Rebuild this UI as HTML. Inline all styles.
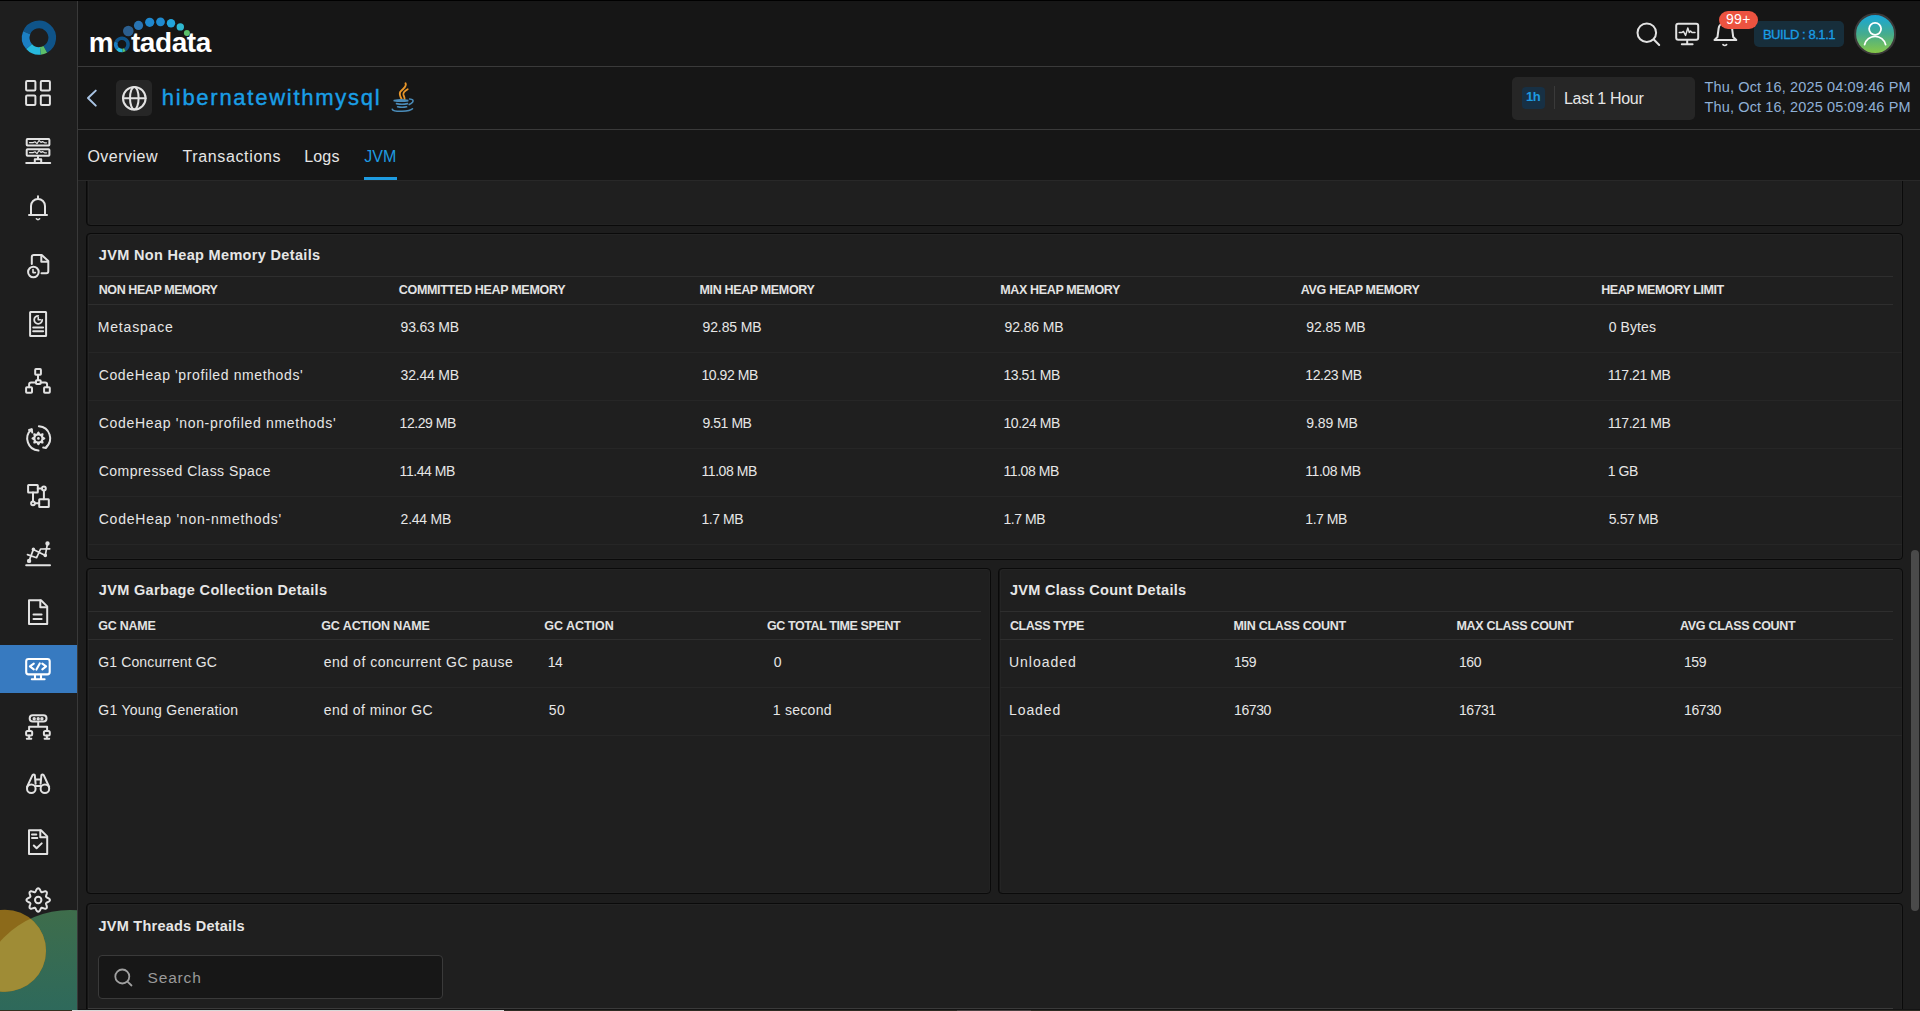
<!DOCTYPE html>
<html><head><meta charset="utf-8"><style>
*{margin:0;padding:0;box-sizing:border-box}
html,body{width:1920px;height:1011px;overflow:hidden;background:#1d1d1d;font-family:"Liberation Sans",sans-serif}
.t{position:absolute;white-space:nowrap;line-height:1}
svg{position:absolute;overflow:visible}
</style></head>
<body>
<div style="position:absolute;left:0px;top:0px;width:1920px;height:1px;background:#000"></div>
<div style="position:absolute;left:0px;top:1px;width:77px;height:1010px;background:#1e1e1e"></div>
<div style="position:absolute;left:77px;top:1px;width:1px;height:1010px;background:#393939"></div>
<div style="position:absolute;left:86px;top:150px;width:1817px;height:76px;background:#1f1f1f;border:1px solid #0a0a0a;border-radius:4px;box-shadow:inset 1px 0 0 #151515, inset 2px 1px 0 #242424, inset -1px -1px 0 #222222"></div>
<div style="position:absolute;left:86px;top:233px;width:1817px;height:327px;background:#1f1f1f;border:1px solid #0a0a0a;border-radius:4px;box-shadow:inset 1px 0 0 #151515, inset 2px 1px 0 #242424, inset -1px -1px 0 #222222"></div>
<div style="position:absolute;left:86px;top:568px;width:905px;height:326px;background:#1f1f1f;border:1px solid #0a0a0a;border-radius:4px;box-shadow:inset 1px 0 0 #151515, inset 2px 1px 0 #242424, inset -1px -1px 0 #222222"></div>
<div style="position:absolute;left:998px;top:568px;width:905px;height:326px;background:#1f1f1f;border:1px solid #0a0a0a;border-radius:4px;box-shadow:inset 1px 0 0 #151515, inset 2px 1px 0 #242424, inset -1px -1px 0 #222222"></div>
<div style="position:absolute;left:86px;top:903px;width:1817px;height:198px;background:#1f1f1f;border:1px solid #0a0a0a;border-radius:4px;box-shadow:inset 1px 0 0 #151515, inset 2px 1px 0 #242424, inset -1px -1px 0 #222222"></div>
<div style="position:absolute;left:78px;top:1px;width:1842px;height:65px;background:#161616"></div>
<div style="position:absolute;left:78px;top:66px;width:1842px;height:1px;background:#3a3a3a"></div>
<div style="position:absolute;left:78px;top:67px;width:1842px;height:62px;background:#161616"></div>
<div style="position:absolute;left:78px;top:129px;width:1842px;height:1px;background:#3a3a3a"></div>
<div style="position:absolute;left:78px;top:130px;width:1842px;height:50px;background:#161616"></div>
<div style="position:absolute;left:78px;top:180px;width:1842px;height:1px;background:#282828"></div>
<div style="position:absolute;left:1911px;top:550px;width:8px;height:361px;background:#4a4a4a;border-radius:4px"></div>
<div class="t" style="left:98.75px;top:247.73px;font-size:14.5px;font-weight:700;color:#e6e6e6;letter-spacing:0.331px;">JVM Non Heap Memory Details</div>
<div style="position:absolute;left:88px;top:276px;width:1805px;height:1px;background:#2e2e2e"></div>
<div style="position:absolute;left:88px;top:304px;width:1805px;height:1px;background:#2e2e2e"></div>
<div class="t" style="left:98.75px;top:284.42px;font-size:12.5px;font-weight:700;color:#e3e3e3;letter-spacing:-0.421px;">NON HEAP MEMORY</div>
<div class="t" style="left:398.75px;top:284.42px;font-size:12.5px;font-weight:700;color:#e3e3e3;letter-spacing:-0.308px;">COMMITTED HEAP MEMORY</div>
<div class="t" style="left:699.50px;top:284.42px;font-size:12.5px;font-weight:700;color:#e3e3e3;letter-spacing:-0.345px;">MIN HEAP MEMORY</div>
<div class="t" style="left:1000.30px;top:284.42px;font-size:12.5px;font-weight:700;color:#e3e3e3;letter-spacing:-0.357px;">MAX HEAP MEMORY</div>
<div class="t" style="left:1300.80px;top:284.42px;font-size:12.5px;font-weight:700;color:#e3e3e3;letter-spacing:-0.313px;">AVG HEAP MEMORY</div>
<div class="t" style="left:1601.20px;top:284.42px;font-size:12.5px;font-weight:700;color:#e3e3e3;letter-spacing:-0.416px;">HEAP MEMORY LIMIT</div>
<div class="t" style="left:97.75px;top:320.45px;font-size:14px;font-weight:400;color:#e6e6e6;letter-spacing:0.819px;">Metaspace</div>
<div class="t" style="left:400.60px;top:320.45px;font-size:14px;font-weight:400;color:#e6e6e6;letter-spacing:-0.212px;">93.63 MB</div>
<div class="t" style="left:702.50px;top:320.45px;font-size:14px;font-weight:400;color:#e6e6e6;letter-spacing:-0.112px;">92.85 MB</div>
<div class="t" style="left:1004.50px;top:320.45px;font-size:14px;font-weight:400;color:#e6e6e6;letter-spacing:-0.112px;">92.86 MB</div>
<div class="t" style="left:1306.30px;top:320.45px;font-size:14px;font-weight:400;color:#e6e6e6;letter-spacing:-0.084px;">92.85 MB</div>
<div class="t" style="left:1608.70px;top:320.45px;font-size:14px;font-weight:400;color:#e6e6e6;letter-spacing:0.102px;">0 Bytes</div>
<div style="position:absolute;left:88px;top:352px;width:1814px;height:1px;background:#262626"></div>
<div class="t" style="left:98.75px;top:368.45px;font-size:14px;font-weight:400;color:#e6e6e6;letter-spacing:0.610px;">CodeHeap &#x27;profiled nmethods&#x27;</div>
<div class="t" style="left:400.60px;top:368.45px;font-size:14px;font-weight:400;color:#e6e6e6;letter-spacing:-0.212px;">32.44 MB</div>
<div class="t" style="left:701.50px;top:368.45px;font-size:14px;font-weight:400;color:#e6e6e6;letter-spacing:-0.450px;">10.92 MB</div>
<div class="t" style="left:1003.50px;top:368.45px;font-size:14px;font-weight:400;color:#e6e6e6;letter-spacing:-0.450px;">13.51 MB</div>
<div class="t" style="left:1305.30px;top:368.45px;font-size:14px;font-weight:400;color:#e6e6e6;letter-spacing:-0.450px;">12.23 MB</div>
<div class="t" style="left:1607.70px;top:368.45px;font-size:14px;font-weight:400;color:#e6e6e6;letter-spacing:-0.450px;">117.21 MB</div>
<div style="position:absolute;left:88px;top:400px;width:1814px;height:1px;background:#262626"></div>
<div class="t" style="left:98.75px;top:416.45px;font-size:14px;font-weight:400;color:#e6e6e6;letter-spacing:0.692px;">CodeHeap &#x27;non-profiled nmethods&#x27;</div>
<div class="t" style="left:399.60px;top:416.45px;font-size:14px;font-weight:400;color:#e6e6e6;letter-spacing:-0.450px;">12.29 MB</div>
<div class="t" style="left:702.50px;top:416.45px;font-size:14px;font-weight:400;color:#e6e6e6;letter-spacing:-0.450px;">9.51 MB</div>
<div class="t" style="left:1003.50px;top:416.45px;font-size:14px;font-weight:400;color:#e6e6e6;letter-spacing:-0.450px;">10.24 MB</div>
<div class="t" style="left:1306.30px;top:416.45px;font-size:14px;font-weight:400;color:#e6e6e6;letter-spacing:-0.100px;">9.89 MB</div>
<div class="t" style="left:1607.70px;top:416.45px;font-size:14px;font-weight:400;color:#e6e6e6;letter-spacing:-0.450px;">117.21 MB</div>
<div style="position:absolute;left:88px;top:448px;width:1814px;height:1px;background:#262626"></div>
<div class="t" style="left:98.75px;top:464.45px;font-size:14px;font-weight:400;color:#e6e6e6;letter-spacing:0.473px;">Compressed Class Space</div>
<div class="t" style="left:399.60px;top:464.45px;font-size:14px;font-weight:400;color:#e6e6e6;letter-spacing:-0.450px;">11.44 MB</div>
<div class="t" style="left:701.50px;top:464.45px;font-size:14px;font-weight:400;color:#e6e6e6;letter-spacing:-0.450px;">11.08 MB</div>
<div class="t" style="left:1003.50px;top:464.45px;font-size:14px;font-weight:400;color:#e6e6e6;letter-spacing:-0.450px;">11.08 MB</div>
<div class="t" style="left:1305.30px;top:464.45px;font-size:14px;font-weight:400;color:#e6e6e6;letter-spacing:-0.450px;">11.08 MB</div>
<div class="t" style="left:1607.70px;top:464.45px;font-size:14px;font-weight:400;color:#e6e6e6;letter-spacing:-0.450px;">1 GB</div>
<div style="position:absolute;left:88px;top:496px;width:1814px;height:1px;background:#262626"></div>
<div class="t" style="left:98.75px;top:512.45px;font-size:14px;font-weight:400;color:#e6e6e6;letter-spacing:0.761px;">CodeHeap &#x27;non-nmethods&#x27;</div>
<div class="t" style="left:400.60px;top:512.45px;font-size:14px;font-weight:400;color:#e6e6e6;letter-spacing:-0.250px;">2.44 MB</div>
<div class="t" style="left:701.50px;top:512.45px;font-size:14px;font-weight:400;color:#e6e6e6;letter-spacing:-0.450px;">1.7 MB</div>
<div class="t" style="left:1003.50px;top:512.45px;font-size:14px;font-weight:400;color:#e6e6e6;letter-spacing:-0.450px;">1.7 MB</div>
<div class="t" style="left:1305.30px;top:512.45px;font-size:14px;font-weight:400;color:#e6e6e6;letter-spacing:-0.450px;">1.7 MB</div>
<div class="t" style="left:1608.70px;top:512.45px;font-size:14px;font-weight:400;color:#e6e6e6;letter-spacing:-0.367px;">5.57 MB</div>
<div style="position:absolute;left:88px;top:544px;width:1814px;height:1px;background:#262626"></div>
<div class="t" style="left:98.75px;top:583.23px;font-size:14.5px;font-weight:700;color:#e6e6e6;letter-spacing:0.343px;">JVM Garbage Collection Details</div>
<div style="position:absolute;left:88px;top:611px;width:893px;height:1px;background:#2e2e2e"></div>
<div style="position:absolute;left:88px;top:639px;width:893px;height:1px;background:#2e2e2e"></div>
<div class="t" style="left:98.25px;top:619.92px;font-size:12.5px;font-weight:700;color:#e3e3e3;letter-spacing:-0.240px;">GC NAME</div>
<div class="t" style="left:321.25px;top:619.92px;font-size:12.5px;font-weight:700;color:#e3e3e3;letter-spacing:-0.102px;">GC ACTION NAME</div>
<div class="t" style="left:544.25px;top:619.92px;font-size:12.5px;font-weight:700;color:#e3e3e3;letter-spacing:-0.014px;">GC ACTION</div>
<div class="t" style="left:767.00px;top:619.92px;font-size:12.5px;font-weight:700;color:#e3e3e3;letter-spacing:-0.407px;">GC TOTAL TIME SPENT</div>
<div class="t" style="left:98.25px;top:655.45px;font-size:14px;font-weight:400;color:#e6e6e6;letter-spacing:0.127px;">G1 Concurrent GC</div>
<div class="t" style="left:323.75px;top:655.45px;font-size:14px;font-weight:400;color:#e6e6e6;letter-spacing:0.526px;">end of concurrent GC pause</div>
<div class="t" style="left:547.75px;top:655.45px;font-size:14px;font-weight:400;color:#e6e6e6;letter-spacing:-0.450px;">14</div>
<div class="t" style="left:773.75px;top:655.45px;font-size:14px;font-weight:400;color:#e6e6e6;letter-spacing:0.000px;">0</div>
<div style="position:absolute;left:88px;top:687px;width:902px;height:1px;background:#262626"></div>
<div class="t" style="left:98.25px;top:703.45px;font-size:14px;font-weight:400;color:#e6e6e6;letter-spacing:0.284px;">G1 Young Generation</div>
<div class="t" style="left:323.75px;top:703.45px;font-size:14px;font-weight:400;color:#e6e6e6;letter-spacing:0.439px;">end of minor GC</div>
<div class="t" style="left:548.75px;top:703.45px;font-size:14px;font-weight:400;color:#e6e6e6;letter-spacing:0.464px;">50</div>
<div class="t" style="left:772.75px;top:703.45px;font-size:14px;font-weight:400;color:#e6e6e6;letter-spacing:0.281px;">1 second</div>
<div style="position:absolute;left:88px;top:735px;width:902px;height:1px;background:#262626"></div>
<div class="t" style="left:1010.00px;top:583.23px;font-size:14.5px;font-weight:700;color:#e6e6e6;letter-spacing:0.275px;">JVM Class Count Details</div>
<div style="position:absolute;left:1000px;top:611px;width:893px;height:1px;background:#2e2e2e"></div>
<div style="position:absolute;left:1000px;top:639px;width:893px;height:1px;background:#2e2e2e"></div>
<div class="t" style="left:1010.00px;top:619.92px;font-size:12.5px;font-weight:700;color:#e3e3e3;letter-spacing:-0.450px;">CLASS TYPE</div>
<div class="t" style="left:1233.50px;top:619.92px;font-size:12.5px;font-weight:700;color:#e3e3e3;letter-spacing:-0.288px;">MIN CLASS COUNT</div>
<div class="t" style="left:1456.50px;top:619.92px;font-size:12.5px;font-weight:700;color:#e3e3e3;letter-spacing:-0.314px;">MAX CLASS COUNT</div>
<div class="t" style="left:1680.00px;top:619.92px;font-size:12.5px;font-weight:700;color:#e3e3e3;letter-spacing:-0.305px;">AVG CLASS COUNT</div>
<div class="t" style="left:1009.00px;top:655.45px;font-size:14px;font-weight:400;color:#e6e6e6;letter-spacing:0.978px;">Unloaded</div>
<div class="t" style="left:1234.00px;top:655.45px;font-size:14px;font-weight:400;color:#e6e6e6;letter-spacing:-0.450px;">159</div>
<div class="t" style="left:1459.00px;top:655.45px;font-size:14px;font-weight:400;color:#e6e6e6;letter-spacing:-0.450px;">160</div>
<div class="t" style="left:1684.00px;top:655.45px;font-size:14px;font-weight:400;color:#e6e6e6;letter-spacing:-0.450px;">159</div>
<div style="position:absolute;left:1000px;top:687px;width:902px;height:1px;background:#262626"></div>
<div class="t" style="left:1009.00px;top:703.45px;font-size:14px;font-weight:400;color:#e6e6e6;letter-spacing:0.914px;">Loaded</div>
<div class="t" style="left:1234.00px;top:703.45px;font-size:14px;font-weight:400;color:#e6e6e6;letter-spacing:-0.411px;">16730</div>
<div class="t" style="left:1459.00px;top:703.45px;font-size:14px;font-weight:400;color:#e6e6e6;letter-spacing:-0.450px;">16731</div>
<div class="t" style="left:1684.00px;top:703.45px;font-size:14px;font-weight:400;color:#e6e6e6;letter-spacing:-0.411px;">16730</div>
<div style="position:absolute;left:1000px;top:735px;width:902px;height:1px;background:#262626"></div>
<div class="t" style="left:98.50px;top:918.53px;font-size:14.5px;font-weight:700;color:#e6e6e6;letter-spacing:0.241px;">JVM Threads Details</div>
<div style="position:absolute;left:98px;top:955px;width:345px;height:44px;background:#171717;border:1px solid #3a3a3a;border-radius:4px"></div>
<div class="t" style="left:147.50px;top:969.68px;font-size:15.5px;font-weight:400;color:#9a9a9a;letter-spacing:0.842px;">Search</div>
<div style="position:absolute;left:88px;top:1008px;width:1805px;height:1px;background:#3a3a3a"></div>
<div style="position:absolute;left:78px;top:1009px;width:1842px;height:1px;background:#141414"></div>
<div class="t" style="left:87.40px;top:149.26px;font-size:16px;font-weight:400;color:#e6e6e6;letter-spacing:0.482px;">Overview</div>
<div class="t" style="left:182.40px;top:149.26px;font-size:16px;font-weight:400;color:#e6e6e6;letter-spacing:0.645px;">Transactions</div>
<div class="t" style="left:304.30px;top:149.26px;font-size:16px;font-weight:400;color:#e6e6e6;letter-spacing:0.135px;">Logs</div>
<div class="t" style="left:364.20px;top:149.26px;font-size:16px;font-weight:400;color:#1e9be0;letter-spacing:0.114px;">JVM</div>
<div style="position:absolute;left:364px;top:177px;width:33px;height:3px;background:#1e9be0"></div>
<div class="t" style="left:161.80px;top:87.18px;font-size:22px;font-weight:400;color:#1a9fe6;letter-spacing:1.734px;-webkit-text-stroke:0.4px #1a9fe6">hibernatewithmysql</div>
<div style="position:absolute;left:116px;top:80px;width:36px;height:36px;background:#262626;border-radius:5px"></div>
<div style="position:absolute;left:1512px;top:77px;width:183px;height:43px;background:#262626;border-radius:5px"></div>
<div style="position:absolute;left:1522px;top:87px;width:23px;height:22px;background:#173044;border-radius:4px"></div>
<div class="t" style="left:1526.00px;top:90.00px;font-size:13px;font-weight:700;color:#1e9be0;letter-spacing:-0.450px;">1h</div>
<div style="position:absolute;left:1554px;top:86px;width:1px;height:23px;background:#3a3a3a"></div>
<div class="t" style="left:1564.00px;top:90.96px;font-size:16px;font-weight:400;color:#e6e6e6;letter-spacing:-0.298px;">Last 1 Hour</div>
<div class="t" style="left:1704.50px;top:80.03px;font-size:14.5px;font-weight:400;color:#8fb0d6;letter-spacing:0.134px;">Thu, Oct 16, 2025 04:09:46 PM</div>
<div class="t" style="left:1704.50px;top:100.43px;font-size:14.5px;font-weight:400;color:#8fb0d6;letter-spacing:0.134px;">Thu, Oct 16, 2025 05:09:46 PM</div>
<div style="position:absolute;left:1754px;top:21px;width:90px;height:26px;background:#172e3b;border-radius:5px"></div>
<div class="t" style="left:1762.90px;top:27.90px;font-size:13px;font-weight:400;color:#1a9ee6;letter-spacing:-0.450px;-webkit-text-stroke:0.3px #1a9ee6">BUILD : 8.1.1</div>
<div class="t" style="left:88.70px;top:29.30px;font-size:28px;font-weight:700;color:#ffffff;letter-spacing:0.000px;">m</div>
<div class="t" style="left:131.00px;top:29.30px;font-size:28px;font-weight:700;color:#ffffff;letter-spacing:-0.450px;">tadata</div>
<svg style="left:0;top:0" width="1920" height="1011" viewBox="0 0 1920 1011"><defs><clipPath id="sbclip"><rect x="0" y="1" width="77" height="1009"/></clipPath><clipPath id="greenc"><circle cx="70" cy="1003.5" r="93.5"/></clipPath><linearGradient id="gg" gradientUnits="userSpaceOnUse" x1="0" y1="910" x2="0" y2="1010"><stop offset="0" stop-color="#3e6d4b"/><stop offset="1" stop-color="#2e695b"/></linearGradient></defs><g clip-path="url(#sbclip)"><circle cx="70" cy="1003.5" r="93.5" fill="url(#gg)"/><circle cx="5" cy="950.7" r="41" fill="#8c6a1a"/><circle cx="5" cy="950.7" r="41" fill="#9f8c36" clip-path="url(#greenc)"/></g><path d="M26.68,32.79 A13.25,13.25 0 1 1 45.27,49.41" stroke="#0f5489" stroke-width="7.7" fill="none"/><path d="M45.27,49.41 A13.25,13.25 0 0 1 40.36,50.93" stroke="#5cbf6a" stroke-width="7.7" fill="none"/><path d="M40.36,50.93 A13.25,13.25 0 0 1 29.06,46.55" stroke="#27b9de" stroke-width="7.7" fill="none"/><path d="M29.06,46.55 A13.25,13.25 0 0 1 26.68,32.79" stroke="#1b7fc4" stroke-width="7.7" fill="none"/><g stroke="#e2e2e2" stroke-width="2" fill="none" stroke-linecap="round" stroke-linejoin="round"><rect x="26.1" y="80.9" width="9.3" height="9.5" rx="1"/><rect x="40.8" y="80.9" width="9.1" height="9.5" rx="1"/><rect x="26.1" y="95.6" width="9.3" height="9.3" rx="1"/><rect x="40.8" y="95.6" width="9.1" height="9.3" rx="1"/></g><g stroke="#e2e2e2" stroke-width="2" fill="none" stroke-linecap="round" stroke-linejoin="round"><rect x="26.7" y="139.1" width="22.7" height="6.5" rx="0.8"/><rect x="26.7" y="149.2" width="22.7" height="6.5" rx="0.8"/><path d="M38,156.7 V158.5 M34.8,162.5 V159.2 H41.2 V162.5 M26.2,163 H50.2" /><path stroke-width="1.2" d="M29.5,142.6 H33 L35,141.8 L37,143.6 L39,140.5 L41,142.4 L42.5,141.6 L44.5,142.8 H46.5 M29.5,152.6 H33 L35,151.8 L37,153.6 L39,150.5 L41,152.4 L42.5,151.6 L44.5,152.8 H46.5"/></g><g stroke="#e2e2e2" stroke-width="2" fill="none" stroke-linecap="round" stroke-linejoin="round"><path d="M31,214.5 V206 A7,7 0 0 1 45,206 V214.5"/><path d="M29,215 H47"/><path d="M38,196.3 V198.5"/><path stroke-width="1.6" d="M36.4,218.8 Q38,220.4 39.6,218.8"/></g><g stroke="#e2e2e2" stroke-width="2" fill="none" stroke-linecap="round" stroke-linejoin="round"><path d="M31.8,264 V257 A2,2 0 0 1 33.8,255 H41.7 L48.3,261 V271.3 A2,2 0 0 1 46.3,273.3 H41.5"/><path d="M41.3,255.5 V261.8 H47.8"/><circle cx="33.4" cy="272" r="5.3"/><path stroke-width="1.6" d="M33,269.6 V272.6 H35.4"/></g><g stroke="#e2e2e2" stroke-width="2" fill="none" stroke-linecap="round" stroke-linejoin="round"><rect x="30.1" y="312.1" width="16" height="23.9" rx="0.5"/><path d="M33.2,327.5 H43.1 M33.2,331.3 H43.1"/><path stroke-width="1.8" d="M38.25,315.8 A4,4 0 1 0 42.2,319.8"/><path stroke-width="1.6" d="M38.25,317.5 V319.8 H40.5"/></g><g stroke="#e2e2e2" stroke-width="2" fill="none" stroke-linecap="round" stroke-linejoin="round"><rect x="35.2" y="369.1" width="5.7" height="5.7" rx="0.8"/><rect x="36" y="380.2" width="4.7" height="3.9" rx="0.8"/><rect x="26.1" y="387.3" width="5.9" height="5.5" rx="0.8"/><rect x="44.1" y="387.3" width="5.7" height="5.5" rx="0.8"/><path d="M38,374.8 V380.2 M36,382.4 H31.1 Q29.1,382.4 29.1,384.4 V387.3 M40.7,382.4 H45.1 Q47.1,382.4 47.1,384.4 V387.3"/></g><g stroke="#e2e2e2" stroke-width="2" fill="none" stroke-linecap="round" stroke-linejoin="round"><path d="M31.5,429.5 A12,12 0 0 0 38.5,450.6"/><path d="M38.9,426.3 A12,12 0 0 1 45.8,447.5"/><path d="M29,430 L31.8,429.3 L32.2,432.5"/><path d="M47.7,445.5 L46,448 L43.2,447.6"/><path stroke="none" fill="#e2e2e2" d="M45.30,438.40 L45.25,438.67 L45.11,438.93 L44.88,439.17 L44.60,439.38 L44.28,439.57 L43.96,439.74 L43.67,439.89 L43.41,440.03 L43.23,440.18 L43.11,440.35 L43.07,440.55 L43.10,440.79 L43.17,441.07 L43.28,441.39 L43.39,441.73 L43.48,442.09 L43.53,442.44 L43.52,442.77 L43.43,443.05 L43.28,443.28 L43.05,443.43 L42.77,443.52 L42.44,443.53 L42.09,443.48 L41.73,443.39 L41.39,443.28 L41.07,443.17 L40.79,443.10 L40.55,443.07 L40.35,443.11 L40.18,443.23 L40.03,443.41 L39.89,443.67 L39.74,443.96 L39.57,444.28 L39.38,444.60 L39.17,444.88 L38.93,445.11 L38.67,445.25 L38.40,445.30 L38.13,445.25 L37.87,445.11 L37.63,444.88 L37.42,444.60 L37.23,444.28 L37.06,443.96 L36.91,443.67 L36.77,443.41 L36.62,443.23 L36.45,443.11 L36.25,443.07 L36.01,443.10 L35.73,443.17 L35.41,443.28 L35.07,443.39 L34.71,443.48 L34.36,443.53 L34.03,443.52 L33.75,443.43 L33.52,443.28 L33.37,443.05 L33.28,442.77 L33.27,442.44 L33.32,442.09 L33.41,441.73 L33.52,441.39 L33.63,441.07 L33.70,440.79 L33.73,440.55 L33.69,440.35 L33.57,440.18 L33.39,440.03 L33.13,439.89 L32.84,439.74 L32.52,439.57 L32.20,439.38 L31.92,439.17 L31.69,438.93 L31.55,438.67 L31.50,438.40 L31.55,438.13 L31.69,437.87 L31.92,437.63 L32.20,437.42 L32.52,437.23 L32.84,437.06 L33.13,436.91 L33.39,436.77 L33.57,436.62 L33.69,436.45 L33.73,436.25 L33.70,436.01 L33.63,435.73 L33.52,435.41 L33.41,435.07 L33.32,434.71 L33.27,434.36 L33.28,434.03 L33.37,433.75 L33.52,433.52 L33.75,433.37 L34.03,433.28 L34.36,433.27 L34.71,433.32 L35.07,433.41 L35.41,433.52 L35.73,433.63 L36.01,433.70 L36.25,433.73 L36.45,433.69 L36.62,433.57 L36.77,433.39 L36.91,433.13 L37.06,432.84 L37.23,432.52 L37.42,432.20 L37.63,431.92 L37.87,431.69 L38.13,431.55 L38.40,431.50 L38.67,431.55 L38.93,431.69 L39.17,431.92 L39.38,432.20 L39.57,432.52 L39.74,432.84 L39.89,433.13 L40.03,433.39 L40.18,433.57 L40.35,433.69 L40.55,433.73 L40.79,433.70 L41.07,433.63 L41.39,433.52 L41.73,433.41 L42.09,433.32 L42.44,433.27 L42.77,433.28 L43.05,433.37 L43.28,433.52 L43.43,433.75 L43.52,434.03 L43.53,434.36 L43.48,434.71 L43.39,435.07 L43.28,435.41 L43.17,435.73 L43.10,436.01 L43.07,436.25 L43.11,436.45 L43.23,436.62 L43.41,436.77 L43.67,436.91 L43.96,437.06 L44.28,437.23 L44.60,437.42 L44.88,437.63 L45.11,437.87 L45.25,438.13 L45.30,438.40Z"/><circle cx="38.4" cy="438.4" r="3.0" fill="#1e1e1e" stroke="none"/><circle cx="38.4" cy="438.4" r="1.3" fill="#e2e2e2" stroke="none"/></g><g stroke="#e2e2e2" stroke-width="2" fill="none" stroke-linecap="round" stroke-linejoin="round"><rect x="28.1" y="484.9" width="9.7" height="7.5" rx="0.5"/><rect x="39.2" y="499.2" width="9.6" height="7.8" rx="0.5"/><circle cx="43.9" cy="488.5" r="1.9"/><circle cx="33" cy="503.3" r="1.9"/><path d="M37.8,488.5 H42 M43.9,490.4 V499.2 M33,492.4 V501.4 M34.9,503.3 H39.2"/></g><g stroke="#e2e2e2" stroke-width="2" fill="none" stroke-linecap="round" stroke-linejoin="round"><path d="M26.2,565.3 H50"/><path stroke-width="1.7" d="M29.1,560.9 L33.4,549.4 L45.3,555.4 L47.5,543.5 M27.5,554.6 L36.6,557.7 L40.6,549 L49.7,548.8"/><circle cx="29.1" cy="560.9" r="1.2" fill="#e2e2e2"/><circle cx="47.5" cy="543.5" r="1.2" fill="#e2e2e2"/><circle cx="33.4" cy="549.4" r="0.8" fill="#e2e2e2"/><circle cx="45.3" cy="555.4" r="0.8" fill="#e2e2e2"/></g><g stroke="#e2e2e2" stroke-width="2" fill="none" stroke-linecap="round" stroke-linejoin="round"><path d="M29,600.2 H41 L47.2,606.4 V624 H29 Z"/><path d="M40.3,600.5 V607.2 H47"/><path d="M33.5,614.4 H41.6 M33.5,618.9 H41.6"/></g><rect x="0" y="645" width="77" height="48" fill="#377ac0"/><g stroke="#ffffff" stroke-width="2.1" fill="none" stroke-linecap="round" stroke-linejoin="round"><rect x="26.2" y="659" width="23.5" height="15.4" rx="2.3"/><path d="M35,675.5 V678.6 M41,675.5 V678.6 M31.8,679.3 H44.6"/><path d="M33.8,663.6 L29.9,666.4 L33.8,669.4 M39.8,663.4 L36.4,669.6 M42.3,663.6 L46.1,666.4 L42.3,669.4"/></g><g stroke="#e2e2e2" stroke-width="2" fill="none" stroke-linecap="round" stroke-linejoin="round"><rect x="29.7" y="715.3" width="16.8" height="6.1" rx="3"/><path d="M38.2,722.4 V726.8 M29.1,730.3 V726.8 H47.1 V730.3"/><rect x="26.1" y="731" width="6.1" height="4.5" rx="1.5"/><rect x="43.9" y="731" width="5.9" height="4.5" rx="1.5"/><path d="M29.1,735.5 V738.7 M26.8,738.7 H31.3 M46.9,735.5 V738.7 M44.6,738.7 H49.2"/><circle cx="34.2" cy="718.7" r="0.7" fill="#e2e2e2"/><circle cx="38.2" cy="718.7" r="0.7" fill="#e2e2e2"/><circle cx="41.9" cy="718.7" r="0.7" fill="#e2e2e2"/></g><g stroke="#e2e2e2" stroke-width="2" fill="none" stroke-linecap="round" stroke-linejoin="round"><circle cx="31.3" cy="788.7" r="4.3"/><circle cx="44.9" cy="788.7" r="4.3"/><path d="M27,787 L32.5,775.2 Q33.8,773.8 34.8,775.2 L35.6,783.8 M49.2,787 L43.7,775.2 Q42.4,773.8 41.4,775.2 L40.6,783.8 M35.6,779.5 H40.6 M35.6,786 H40.6"/></g><g stroke="#e2e2e2" stroke-width="2" fill="none" stroke-linecap="round" stroke-linejoin="round"><path d="M29,830.2 H41 L47.2,836.4 V854 H29 Z"/><path d="M40.3,830.5 V837.2 H47"/><path d="M32,834.5 H36.3 M32,838 H37.3"/><path d="M33.8,845.5 L36.6,848.3 L41.7,843.4"/></g><g stroke="#e2e2e2" stroke-width="2" fill="none" stroke-linecap="round" stroke-linejoin="round"><path d="M49.90,900.00 L49.81,900.46 L49.56,900.89 L49.16,901.30 L48.66,901.66 L48.11,901.97 L47.54,902.24 L47.02,902.49 L46.57,902.72 L46.25,902.97 L46.05,903.25 L45.99,903.59 L46.05,904.00 L46.19,904.48 L46.39,905.02 L46.60,905.61 L46.77,906.23 L46.87,906.84 L46.86,907.40 L46.73,907.89 L46.47,908.27 L46.09,908.53 L45.60,908.66 L45.04,908.67 L44.43,908.57 L43.81,908.40 L43.22,908.19 L42.68,907.99 L42.20,907.85 L41.79,907.79 L41.45,907.85 L41.17,908.05 L40.92,908.37 L40.69,908.82 L40.44,909.34 L40.17,909.91 L39.86,910.46 L39.50,910.96 L39.09,911.36 L38.66,911.61 L38.20,911.70 L37.74,911.61 L37.31,911.36 L36.90,910.96 L36.54,910.46 L36.23,909.91 L35.96,909.34 L35.71,908.82 L35.48,908.37 L35.23,908.05 L34.95,907.85 L34.61,907.79 L34.20,907.85 L33.72,907.99 L33.18,908.19 L32.59,908.40 L31.97,908.57 L31.36,908.67 L30.80,908.66 L30.31,908.53 L29.93,908.27 L29.67,907.89 L29.54,907.40 L29.53,906.84 L29.63,906.23 L29.80,905.61 L30.01,905.02 L30.21,904.48 L30.35,904.00 L30.41,903.59 L30.35,903.25 L30.15,902.97 L29.83,902.72 L29.38,902.49 L28.86,902.24 L28.29,901.97 L27.74,901.66 L27.24,901.30 L26.84,900.89 L26.59,900.46 L26.50,900.00 L26.59,899.54 L26.84,899.11 L27.24,898.70 L27.74,898.34 L28.29,898.03 L28.86,897.76 L29.38,897.51 L29.83,897.28 L30.15,897.03 L30.35,896.75 L30.41,896.41 L30.35,896.00 L30.21,895.52 L30.01,894.98 L29.80,894.39 L29.63,893.77 L29.53,893.16 L29.54,892.60 L29.67,892.11 L29.93,891.73 L30.31,891.47 L30.80,891.34 L31.36,891.33 L31.97,891.43 L32.59,891.60 L33.18,891.81 L33.72,892.01 L34.20,892.15 L34.61,892.21 L34.95,892.15 L35.23,891.95 L35.48,891.63 L35.71,891.18 L35.96,890.66 L36.23,890.09 L36.54,889.54 L36.90,889.04 L37.31,888.64 L37.74,888.39 L38.20,888.30 L38.66,888.39 L39.09,888.64 L39.50,889.04 L39.86,889.54 L40.17,890.09 L40.44,890.66 L40.69,891.18 L40.92,891.63 L41.17,891.95 L41.45,892.15 L41.79,892.21 L42.20,892.15 L42.68,892.01 L43.22,891.81 L43.81,891.60 L44.43,891.43 L45.04,891.33 L45.60,891.34 L46.09,891.47 L46.47,891.73 L46.73,892.11 L46.86,892.60 L46.87,893.16 L46.77,893.77 L46.60,894.39 L46.39,894.98 L46.19,895.52 L46.05,896.00 L45.99,896.41 L46.05,896.75 L46.25,897.03 L46.57,897.28 L47.02,897.51 L47.54,897.76 L48.11,898.03 L48.66,898.34 L49.16,898.70 L49.56,899.11 L49.81,899.54 L49.90,900.00Z"/><circle cx="38.2" cy="900" r="3.2"/></g><path d="M116.20,42.10 A6.15,6.15 0 1 1 124.83,49.81" stroke="#0f5489" stroke-width="3.5" fill="none"/><path d="M124.83,49.81 A6.15,6.15 0 0 1 122.54,50.52" stroke="#5cbf6a" stroke-width="3.5" fill="none"/><path d="M122.54,50.52 A6.15,6.15 0 0 1 117.30,48.48" stroke="#27b9de" stroke-width="3.5" fill="none"/><path d="M117.30,48.48 A6.15,6.15 0 0 1 116.20,42.10" stroke="#1b7fc4" stroke-width="3.5" fill="none"/><circle cx="128.3" cy="31" r="5.3" fill="#2c5f8f"/><circle cx="138.5" cy="25.4" r="4.6" fill="#2874b4"/><circle cx="149.7" cy="22.3" r="4.6" fill="#1f88cf"/><circle cx="160.5" cy="21.8" r="4.4" fill="#1f8bd0"/><circle cx="171" cy="23.2" r="4.2" fill="#22a5dc"/><circle cx="180.3" cy="26.9" r="3.7" fill="#2fb8d0"/><circle cx="186.9" cy="33" r="3.0" fill="#5cc06a"/><path d="M95.75,90.6 L88,98 L95.75,105.6" stroke="#a9c4e4" stroke-width="2" fill="none" stroke-linecap="round" stroke-linejoin="round"/><g stroke="#e2e2e2" stroke-width="2" fill="none" stroke-linecap="round" stroke-linejoin="round" stroke-width="2.1"><circle cx="134.3" cy="98.2" r="11.3"/><path d="M123,98.2 H145.6"/><ellipse cx="134.3" cy="98.2" rx="4.3" ry="11.3"/></g><g fill="none" stroke-linecap="round"><path d="M405.5,83.3 C407.5,87 402,89 400.2,92 C399,94.5 400.5,97 401.6,99" stroke="#e8962a" stroke-width="1.9"/><path d="M407.7,89.3 C405,90.8 403,92 403.4,94.5 C403.8,96.5 405,97.5 404.5,99.6" stroke="#e8962a" stroke-width="1.8"/><g stroke="#4a8bb8" stroke-width="1.6"><path d="M394.2,100.6 Q401,98.9 408.3,100.6 Q401,102 394.2,100.6"/><path d="M409.6,99 Q414.5,99.5 412.5,102.3 Q411,104 409.2,104.6"/><path d="M396.5,103.6 Q402,104.8 407.5,103.6"/><path d="M397.6,106.8 Q402,107.8 406.6,106.8"/><path d="M392.3,109.2 Q393,111.5 402,111.3 Q410.5,111 412.5,108.8"/></g></g><g stroke="#e2e2e2" stroke-width="2" fill="none" stroke-linecap="round" stroke-linejoin="round" stroke-width="2.2"><circle cx="1646.8" cy="32.7" r="9.3"/><path d="M1653.8,39.5 L1659.2,45"/></g><g stroke="#e2e2e2" stroke-width="2" fill="none" stroke-linecap="round" stroke-linejoin="round" stroke-width="2.1"><rect x="1676.2" y="23.8" width="22" height="15.9" rx="2"/><path d="M1687.2,40.7 V43.8 M1681.8,44.3 H1692.6"/><path stroke-width="1.5" d="M1679.3,32.4 H1682 L1683.5,31.5 L1685.6,35.4 L1687.8,28 L1689.3,32.4 L1690.5,31 L1692,32.6 H1695"/></g><g stroke="#e2e2e2" stroke-width="2" fill="none" stroke-linecap="round" stroke-linejoin="round"><path d="M1714.5,40 L1717.5,37 L1718.6,28.5 A6.8,6.8 0 0 1 1732.1,28.5 L1733.2,37 L1736.3,40 Z"/><path stroke-width="1.7" d="M1723,44.6 Q1724.8,46.4 1726.6,44.6"/></g><defs><linearGradient id="avg" x1="0" y1="0" x2="0" y2="1"><stop offset="0" stop-color="#14a6de"/><stop offset="0.5" stop-color="#45ac8e"/><stop offset="1" stop-color="#8ac944"/></linearGradient></defs><circle cx="1875.1" cy="34" r="20" fill="url(#avg)" stroke="#3b3939" stroke-width="2"/><g stroke="#ffffff" stroke-width="1.8" fill="none" stroke-linecap="round"><circle cx="1875.1" cy="28.8" r="6"/><path d="M1864.6,44.6 A10.8,10.8 0 0 1 1885.6,44.6"/></g><g stroke="#a0a0a0" stroke-width="1.8" fill="none" stroke-linecap="round"><circle cx="122.3" cy="976.5" r="7"/><path d="M127.5,981.7 L131.5,985.5"/></g></svg>
<div style="position:absolute;left:0px;top:1010px;width:72px;height:1px;background:#33301f"></div>
<div style="position:absolute;left:72px;top:1010px;width:432px;height:1px;background:#d8d8d8"></div>
<div style="position:absolute;left:504px;top:1010px;width:1416px;height:1px;background:#2d2b22"></div>
<div style="position:absolute;left:957px;top:1010px;width:74px;height:1px;background:#4a4242"></div>
<div style="position:absolute;left:1719px;top:11px;width:39px;height:18px;background:#ec5340;border-radius:9px"></div>
<div class="t" style="left:1725.90px;top:11.95px;font-size:14px;font-weight:400;color:#ffffff;letter-spacing:0.364px;">99+</div>
</body></html>
